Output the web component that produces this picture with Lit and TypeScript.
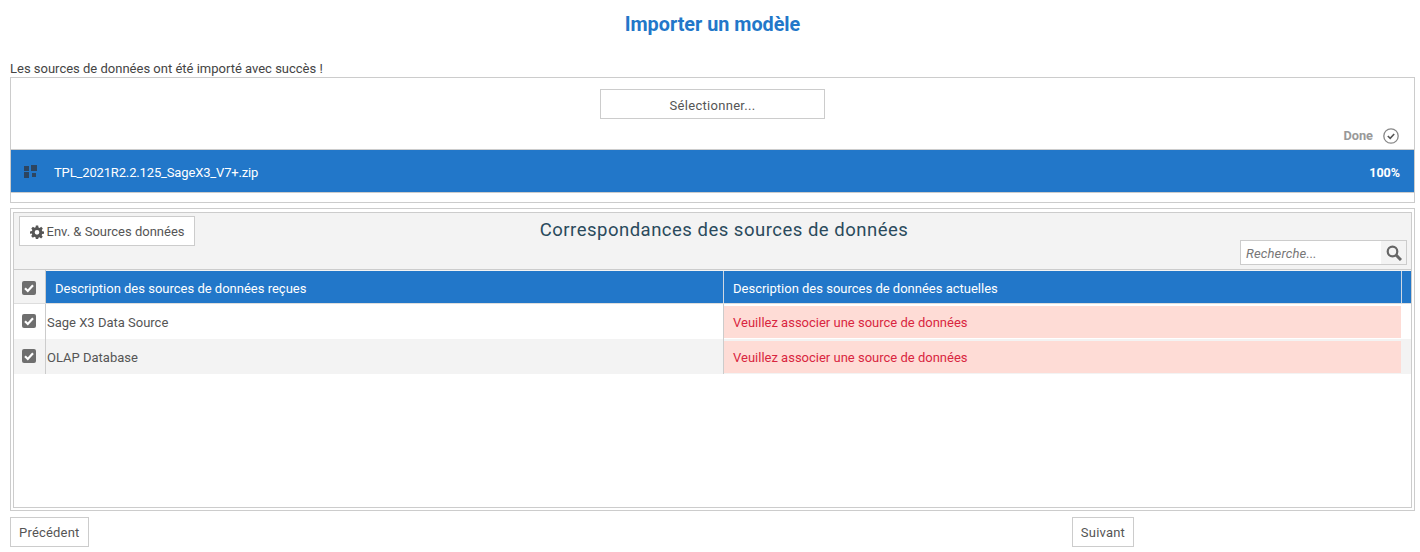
import { LitElement, html, css } from "lit";
import { customElement } from "lit/decorators.js";

const check = html`<svg class="cb" viewBox="0 0 14 14" width="14" height="14"><rect width="14" height="14" rx="2" fill="#6f6f6f"/><path d="M3 7.200l2.800 2.800L11 4.300" fill="none" stroke="#fff" stroke-width="2.200"/></svg>`;

@customElement("app-root")
export class AppRoot extends LitElement {
  static styles = css`
    :host { display: block; width: 1420px; height: 552px; overflow: hidden; background: #fff; font-family: Roboto, "Liberation Sans", sans-serif; font-size: 13px; color: #555; box-sizing: border-box; padding: 0 5px 0 10px; }
    * { box-sizing: border-box; }
    h1 { margin: 0; height: 61px; padding: 13px 0 0; text-align: center; font-size: 19.800px; line-height: 24px; font-weight: 700; color: #2277c9; }
    .msg { height: 16px; line-height: 14px; font-size: 13px; color: #444; padding-top: 1px; }
    .upload { height: 126px; border: 1px solid #ccc; display: flex; flex-direction: column; align-items: stretch; }
    .sel-wrap { display: flex; justify-content: center; padding-top: 11px; }
    .btn { border: 1px solid #ccc; background: #fff; color: #555; display: flex; align-items: center; justify-content: center; font-size: 13px; letter-spacing: 0.2px; }
    .sel { width: 225px; height: 30px; letter-spacing: 0.3px; padding-top: 2px; }
    .done { height: 30px; display: flex; justify-content: flex-end; align-items: center; gap: 10px; padding: 4px 15px 0 0; font-weight: 700; font-size: 12.800px; color: #999; }
    .done span { margin-top: -2px; }
    .file { height: 44px; border-top: 1px solid #ccc; border-bottom: 1px solid #ccc; background: #2277c9; color: #fff; display: flex; align-items: center; padding: 2px 14px 0 13px; font-size: 13px; }
    .file svg { margin: -2px 17px 0 0; }
    .file .name { flex: 1; letter-spacing: -0.150px; }
    .file .pct { font-weight: 700; font-size: 12.500px; }
    .outer { margin-top: 5px; height: 303px; border: 1px solid #ccc; padding: 3px 2px; }
    .inner { height: 296px; border: 1px solid #ccc; display: flex; flex-direction: column; }
    .head { height: 56px; background: #f3f3f3; display: grid; grid-template-columns: 1fr auto 1fr; padding: 3px 4px 0 5px; }
    .env { width: 176px; height: 30px; gap: 3px; letter-spacing: 0; }
    .env svg { margin-top: 2px; }
    .title { font-size: 18.500px; color: #2a4a5c; line-height: 26px; padding: 1px 0 0 22px; letter-spacing: 0.500px; }
    .search-wrap { display: flex; justify-content: flex-end; align-items: flex-end; padding-bottom: 4px; }
    .search { width: 167px; height: 25px; border: 1px solid #ccc; display: flex; background: #fff; }
    .search .ph { flex: 1; font-style: italic; color: #777; padding-left: 5px; line-height: 25px; letter-spacing: 0.150px; }
    .search .ico { width: 25px; background: #f3f3f3; display: flex; align-items: center; justify-content: center; }
    .table-head { height: 35px; display: flex; border-top: 1px solid #ccc; border-bottom: 1px solid #ddd; background: #f3f3f3; }
    .c0 { width: 32px; flex: none; display: flex; align-items: center; justify-content: center; border-right: 1px solid #ccc; padding: 0 2px 2px 0; }
    .table-head .c0 { padding: 3px 2px 0 0; }
    .th { background: #2277c9; color: #fff; display: flex; align-items: center; padding: 3px 0 0 9px; font-size: 13px; height: 32px; margin-top: 1px; }
    .th.a { width: 678px; flex: none; border-right: 1px solid #cfd8e3; }
    .th.b { flex: 1; border-right: 1px solid #cfd8e3; }
    .th.c { width: 9px; flex: none; padding: 0; }
    .row { height: 35px; display: flex; background: #fff; }
    .row.alt { background: #f3f3f3; }
    .ca { width: 678px; flex: none; border-right: 1px solid #ccc; display: flex; align-items: center; padding: 1px 0 0 1px; color: #555; }
    .err { flex: 1; margin: 2px 10px 0 0; height: 32px; background: #fedcd6; color: #d9263f; display: flex; align-items: center; padding-left: 9px; }
    .foot { display: flex; justify-content: space-between; padding: 6px 281px 0 0; }
    .foot .btn { height: 30px; padding: 0 8px; }
  `;
  render() {
    return html`
      <h1>Importer un modèle</h1>
      <div class="msg">Les sources de données ont été importé avec succès !</div>
      <section class="upload">
        <div class="sel-wrap"><div class="btn sel">Sélectionner...</div></div>
        <div class="done"><span>Done</span>
          <svg width="16" height="16" viewBox="0 0 16 16"><circle cx="8" cy="8" r="7.200" fill="none" stroke="#888" stroke-width="1.300"/><path d="M4.800 8l2.400 2.400 4-4.400" fill="none" stroke="#555" stroke-width="1.600"/></svg>
        </div>
        <div class="file">
          <svg width="13" height="13" viewBox="0 0 13 13" fill="#2d4560"><rect x="0" y="1" width="5" height="5"/><rect x="7" y="0" width="6" height="6"/><rect x="0" y="7" width="5" height="6"/><rect x="8" y="8" width="4" height="4"/></svg>
          <span class="name">TPL_2021R2.2.125_SageX3_V7+.zip</span>
          <span class="pct">100%</span>
        </div>
      </section>
      <section class="outer"><div class="inner">
        <div class="head">
          <div class="btn env">
            <svg width="14" height="14" viewBox="0 0 24 24" fill="#555"><path fill-rule="evenodd" d="M10 1h4l.6 3.200 1.900.8 2.700-1.800 2.800 2.800-1.800 2.700.8 1.900L24 11v4l-3.200.6-.8 1.900 1.800 2.700-2.800 2.800-2.700-1.800-1.900.8L14 24h-4l-.6-3.200-1.900-.8-2.700 1.800-2.800-2.800 1.800-2.700-.8-1.900L0 15v-4l3.200-.6.8-1.900L2.200 5.800 5 3l2.700 1.800 1.900-.8zM12 8.500a4 4 0 1 0 0 8 4 4 0 0 0 0-8z"/></svg>
            <span>Env. &amp; Sources données</span>
          </div>
          <div class="title">Correspondances des sources de données</div>
          <div class="search-wrap"><div class="search"><span class="ph">Recherche...</span>
            <span class="ico"><svg width="16" height="16" viewBox="0 0 16 16"><circle cx="6.500" cy="6.500" r="4.800" fill="none" stroke="#666" stroke-width="2.200"/><path d="M10 10l5 5" stroke="#666" stroke-width="3"/></svg></span></div></div>
        </div>
        <div class="table-head">
          <div class="c0">${check}</div>
          <div class="th a">Description des sources de données reçues</div>
          <div class="th b">Description des sources de données actuelles</div>
          <div class="th c"></div>
        </div>
        <div class="row"><div class="c0">${check}</div><div class="ca">Sage X3 Data Source</div><div class="err">Veuillez associer une source de données</div></div>
        <div class="row alt"><div class="c0">${check}</div><div class="ca">OLAP Database</div><div class="err">Veuillez associer une source de données</div></div>
      </div></section>
      <div class="foot"><div class="btn">Précédent</div><div class="btn">Suivant</div></div>
    `;
  }
}
